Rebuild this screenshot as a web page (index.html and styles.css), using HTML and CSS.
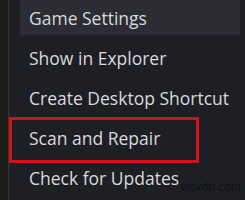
FILE: index.html
```html
<html lang="en">
  <head>
    <meta charset="UTF-8" />
    <meta name="viewport" content="width=device-width, initial-scale=1.0" />
    <title>Menu</title>
    <link rel="stylesheet" href="styles.css">
  </head>
  <body>
    <div class="screen">
      <div class="side"></div>
      <ul class="menu">
        <li class="item active">Game Settings</li>
        <li class="item">Show in Explorer</li>
        <li class="item">Create Desktop Shortcut</li>
        <li class="item">Scan and Repair</li>
        <li class="item">Check for Updates</li>
      </ul>
      <div class="mark"></div>
      <div class="watermark">wsxdn.com</div>
    </div>
  </body>
</html>
```

FILE: styles.css
```css
body {
  margin: 0;
  background-color: #1e1f25;
  font-family: "Open Sans", "Noto Sans", sans-serif;
}

.screen {
  position: relative;
  display: flex;
  width: 245px;
  height: 200px;
  overflow: hidden;
  background-color: #1e1f25;
}

.side {
  width: 8px;
  flex-shrink: 0;
  background-color: #1c1f17;
  border-right: 1px solid #34363b;
}

.menu {
  list-style: none;
  margin: 0;
  padding: 0 5px 0 11px;
  flex: 1;
}

.item {
  height: 36px;
  line-height: 36px;
  padding-bottom: 4px;
  padding-left: 9px;
  font-size: 17.5px;
  font-weight: 500;
  color: #d8d9db;
  white-space: nowrap;
}

.item.active {
  height: 31px;
  line-height: 31px;
  padding-top: 3px;
  padding-bottom: 0;
  margin-bottom: 4px;
  background-color: #2b2c34;
  border-bottom: 2px solid #25262d;
}

.mark {
  position: absolute;
  left: 9px;
  top: 117px;
  width: 184px;
  height: 40px;
  border: 3px solid #d0151d;
}

.watermark {
  position: absolute;
  left: 181px;
  top: 180px;
  font-family: "Liberation Sans", sans-serif;
  font-size: 12px;
  color: #0f1115;
}
```
